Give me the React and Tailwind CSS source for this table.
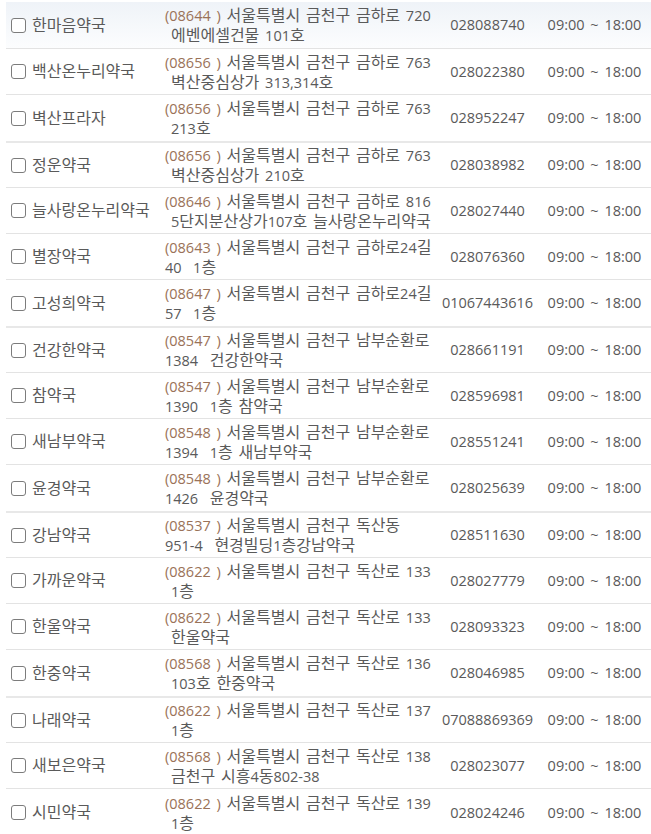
import React from "react";

const rows = [
  ["한마음약국", "08644", "서울특별시 금천구 금하로 720", "에벤에셀건물 101호", true, "028088740"],
  ["백산온누리약국", "08656", "서울특별시 금천구 금하로 763", "벽산중심상가 313,314호", true, "028022380"],
  ["벽산프라자", "08656", "서울특별시 금천구 금하로 763", "213호", true, "028952247"],
  ["정운약국", "08656", "서울특별시 금천구 금하로 763", "벽산중심상가 210호", true, "028038982"],
  ["늘사랑온누리약국", "08646", "서울특별시 금천구 금하로 816", "5단지분산상가107호 늘사랑온누리약국", true, "028027440"],
  ["별장약국", "08643", "서울특별시 금천구 금하로24길", "40\u00a0\u00a01층", false, "028076360"],
  ["고성희약국", "08647", "서울특별시 금천구 금하로24길", "57\u00a0\u00a01층", false, "01067443616"],
  ["건강한약국", "08547", "서울특별시 금천구 남부순환로", "1384\u00a0\u00a0건강한약국", false, "028661191"],
  ["참약국", "08547", "서울특별시 금천구 남부순환로", "1390\u00a0\u00a01층 참약국", false, "028596981"],
  ["새남부약국", "08548", "서울특별시 금천구 남부순환로", "1394\u00a0\u00a01층 새남부약국", false, "028551241"],
  ["윤경약국", "08548", "서울특별시 금천구 남부순환로", "1426\u00a0\u00a0윤경약국", false, "028025639"],
  ["강남약국", "08537", "서울특별시 금천구 독산동", "951-4\u00a0\u00a0현경빌딩1층강남약국", false, "028511630"],
  ["가까운약국", "08622", "서울특별시 금천구 독산로 133", "1층", true, "028027779"],
  ["한울약국", "08622", "서울특별시 금천구 독산로 133", "한울약국", true, "028093323"],
  ["한중약국", "08568", "서울특별시 금천구 독산로 136", "103호 한중약국", true, "028046985"],
  ["나래약국", "08622", "서울특별시 금천구 독산로 137", "1층", true, "07088869369"],
  ["새보은약국", "08568", "서울특별시 금천구 독산로 138", "금천구 시흥4동802-38", true, "028023077"],
  ["시민약국", "08622", "서울특별시 금천구 독산로 139", "1층", true, "028024246"],
];

// row box classes (height includes bottom border)
const rowCls = [
  "h-[47px] border-b border-[#e3e3e3] bg-linear-to-b from-[#eff3f8] to-[#fcfdfe]",
  "h-[46px] border-b border-[#e3e3e3]",
  "h-[48px] border-b-2 border-[#e8e8e8]",
  "h-[45px] border-b border-[#e3e3e3]",
  "h-[46px] border-b border-[#e3e3e3]",
  "h-[46px] border-b border-[#e3e3e3]",
  "h-[48px] border-b-2 border-[#e8e8e8]",
  "h-[45px] border-b border-[#e3e3e3]",
  "h-[46px] border-b border-[#e3e3e3]",
  "h-[46px] border-b border-[#e3e3e3]",
  "h-[48px] border-b-2 border-[#e8e8e8]",
  "h-[45px] border-b border-[#e3e3e3]",
  "h-[46px] border-b border-[#e3e3e3]",
  "h-[46px] border-b border-[#e3e3e3]",
  "h-[48px] border-b-2 border-[#e8e8e8]",
  "h-[45px] border-b border-[#e3e3e3]",
  "h-[46px] border-b border-[#e3e3e3]",
  "h-[47px]",
];

// Hangul runs get a larger size so their advance matches the reference font
function K({ text }) {
  const parts = text.split(/([\uac00-\ud7a3]+)/);
  return (
    <>
      {parts.map((p, i) =>
        /[\uac00-\ud7a3]/.test(p) ? (
          <span key={i} className="text-[16px] leading-[20px]">
            {p}
          </span>
        ) : (
          <React.Fragment key={i}>{p}</React.Fragment>
        )
      )}
    </>
  );
}

export default function App() {
  return (
    <div
      className="w-[651px] h-[834px] overflow-hidden bg-white pt-[2px] pl-[6px] text-[14.5px] leading-[20px] text-[#5a5a5a] [word-spacing:2px]"
      style={{ fontFamily: '"Open Sans", "Noto Sans CJK KR", sans-serif' }}
    >
      {rows.map((r, i) => (
        <div key={i} className={"flex items-center " + rowCls[i]}>
          <div className="w-[154px] shrink-0 flex items-center pl-[5px]">
            <span className="w-[15px] h-[15px] shrink-0 rounded-[3px] border border-[#7c7c7c] bg-white mr-[6px]" />
            <span className="whitespace-nowrap">
              <K text={r[0]} />
            </span>
          </div>
          <div className="w-[277px] shrink-0 pl-[5px] whitespace-nowrap">
            <div className="h-[20px]">
              <span className="text-[#9a7258]">({r[1]} )</span> <K text={r[2]} />
            </div>
            <div className={r[4] ? "h-[20px] pl-[6px]" : "h-[20px]"}>
              <K text={r[3]} />
            </div>
          </div>
          <div className="w-[101px] shrink-0 text-center">{r[5]}</div>
          <div className="w-[113px] shrink-0 text-center whitespace-nowrap">09:00 ~ 18:00</div>
        </div>
      ))}
    </div>
  );
}
